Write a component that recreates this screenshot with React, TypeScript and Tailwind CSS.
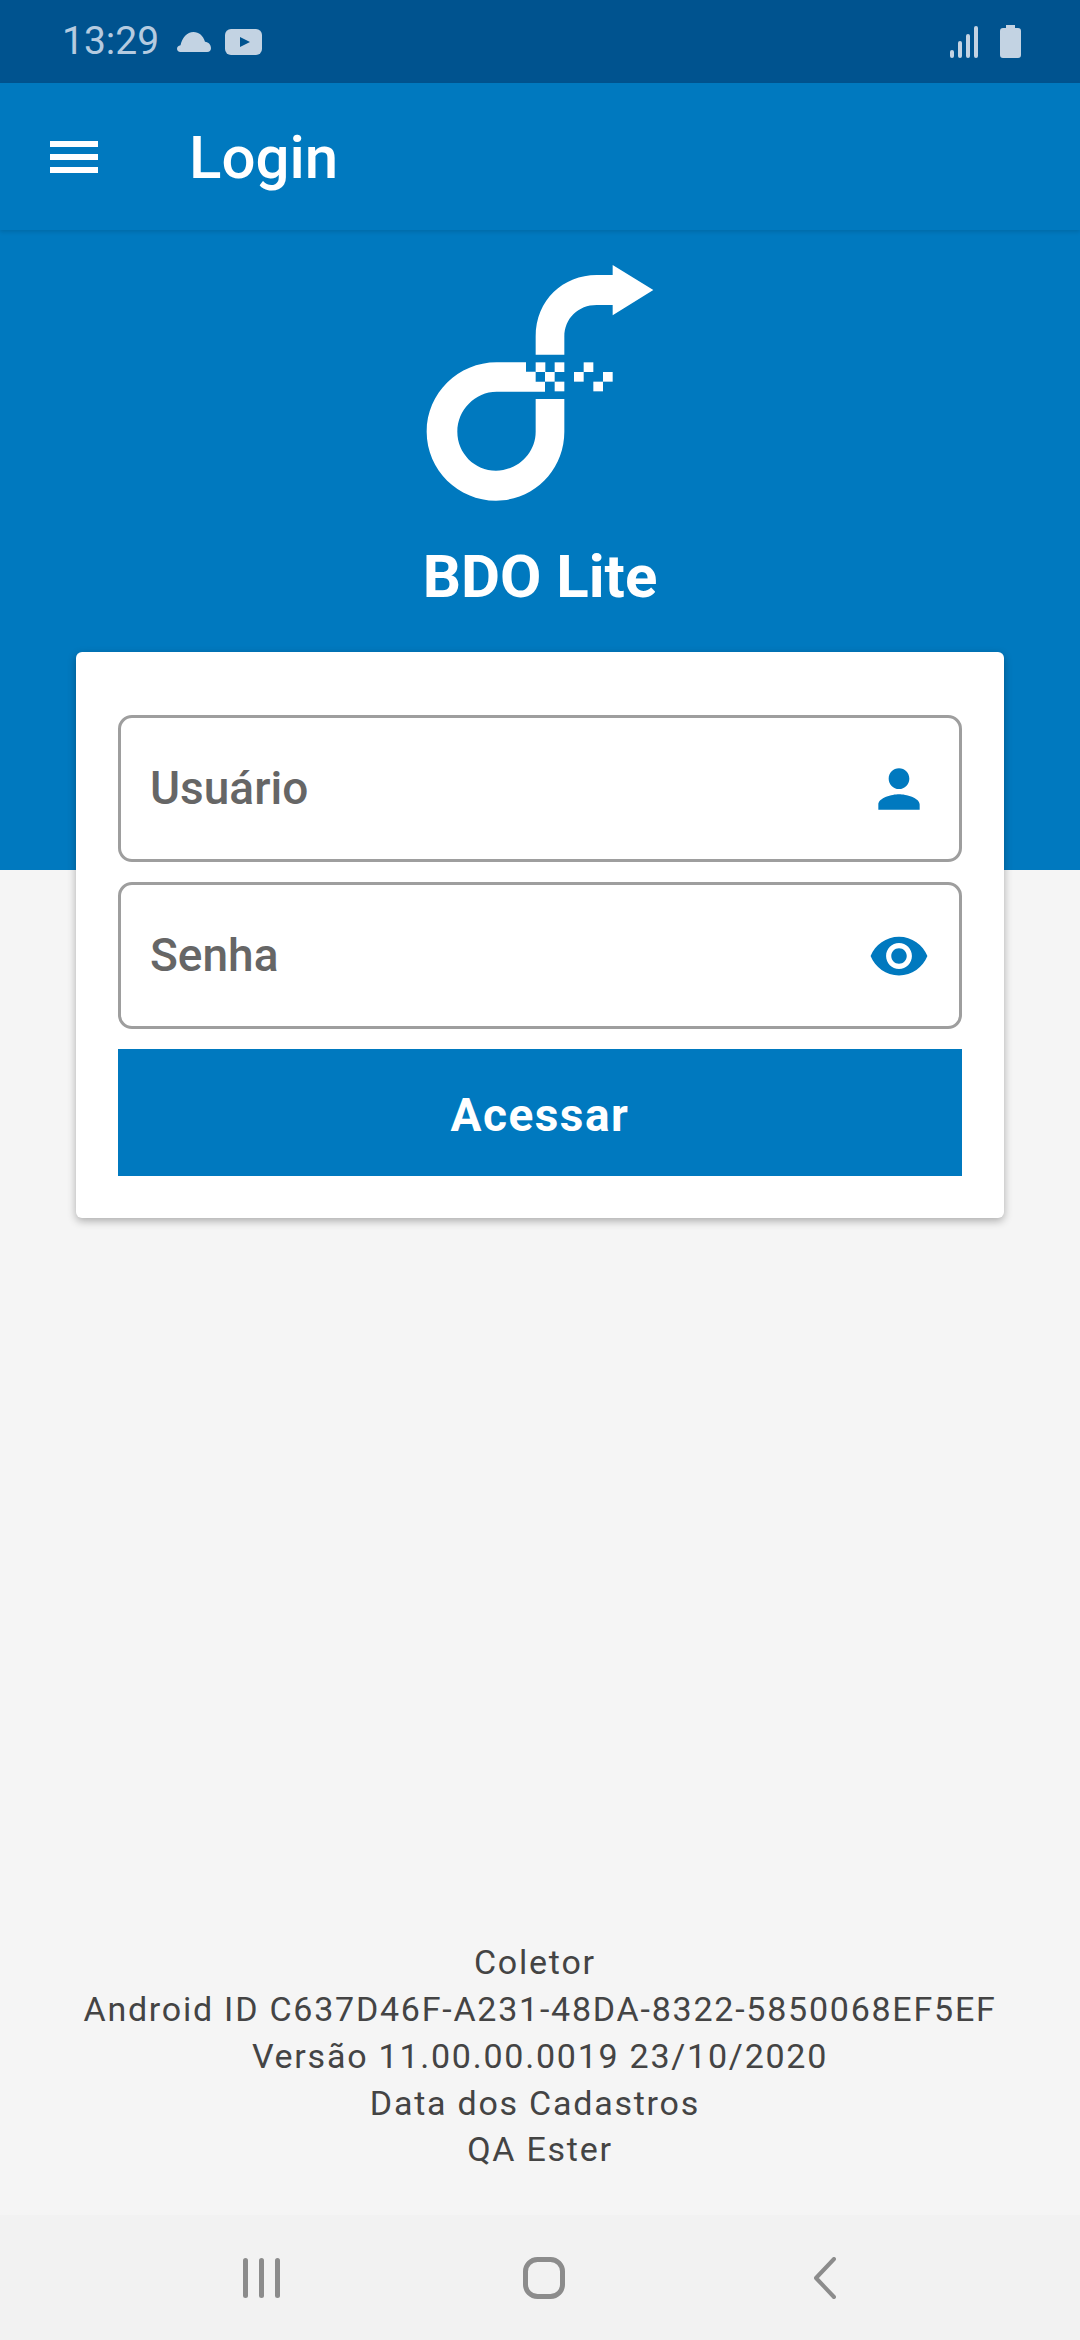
export default function App() {
    return (
        <div className="relative flex flex-col h-[2340px] w-[1080px] overflow-hidden bg-[#f5f5f5] font-['Roboto',sans-serif]">
            {/* status bar */}
            <div className="flex items-center justify-between h-[83px] bg-[#00538f] pl-[62px] pr-[59px]">
                <div className="flex items-center">
                    <span className="text-[39px] leading-none text-[#b5cbe0]">13:29</span>
                    <svg className="ml-[18px] w-[34px] h-[20px]" viewBox="0 0 34 20" fill="#c3d3e3">
                        <path d="M3.5 20C1.3 20 0 18.6 0 16.8 0 15 1.3 13.6 3.5 13.3 5.2 5.5 10 0 16.5 0 22 0 26 3.5 28 9.8c3.6.5 6 3 6 6.4 0 2.4-1.5 3.8-3.8 3.8z" />
                    </svg>
                    <svg className="ml-[14px] w-[37px] h-[26px]" viewBox="0 0 37 26">
                        <rect width="37" height="26" rx="6" fill="#c3d3e3" />
                        <path d="M15 8l10 5-10 5z" fill="#00538f" />
                    </svg>
                </div>
                <div className="flex items-center gap-[21px]">
                    <svg className="w-[30px] h-[32px]" viewBox="0 0 30 32" fill="#c3d3e3">
                        <rect x="1" y="24" width="4" height="8" rx="2" />
                        <rect x="9" y="15" width="4" height="17" rx="2" />
                        <rect x="17" y="8" width="4" height="24" rx="2" />
                        <rect x="25" y="0" width="4" height="32" rx="2" />
                    </svg>
                    <svg className="w-[21px] h-[33px]" viewBox="0 0 21 33" fill="#c3d3e3">
                        <path d="M6 0h9v3h3a3 3 0 0 1 3 3v24a3 3 0 0 1-3 3H3a3 3 0 0 1-3-3V6a3 3 0 0 1 3-3h3z" />
                    </svg>
                </div>
            </div>

            {/* hero */}
            <div className="flex flex-col items-center h-[787px] bg-[#0079bf]">
                <div className="flex items-center self-stretch h-[147px] pl-[50px] bg-[#0079bf] shadow-[0_2px_4px_rgba(0,0,0,0.12)]">
                    <div className="flex flex-col gap-[7px] w-[48px]">
                        <div className="h-[6px] bg-white"></div>
                        <div className="h-[6px] bg-white"></div>
                        <div className="h-[6px] bg-white"></div>
                    </div>
                    <h1 className="ml-[91px] pt-[3px] text-[60px] leading-none font-medium text-white">Login</h1>
                </div>
                <svg className="mt-[20px] w-[280px] h-[270px]" viewBox="0 0 840 810" fill="white">
                    <path d="M407 314V260C407 150 490 75 590 75H638V45L760 120 638 196V165H590C535 165 493 205 493 260V314Z" />
                    <path d="M378 337H290C175 337 80 430 80 545S175 752 288 752 493 660 493 545V447H407V545C407 610 352 662 288 662S172 610 172 545 225 425 290 425H435V395H407V365H378Z" />
                    <rect x="407" y="337" width="29" height="29" />
                    <rect x="464" y="337" width="29" height="29" />
                    <rect x="435" y="366" width="29" height="29" />
                    <rect x="464" y="395" width="29" height="29" />
                    <rect x="551" y="337" width="29" height="29" />
                    <rect x="522" y="366" width="29" height="29" />
                    <rect x="609" y="366" width="29" height="29" />
                    <rect x="580" y="395" width="29" height="29" />
                </svg>
                <h2 className="mt-[27px] text-[60px] leading-none font-bold text-white">BDO Lite</h2>
            </div>

            {/* card sits over the end of the hero */}
            <div className="relative mt-[-218px] mx-[76px] flex flex-col gap-[20px] pt-[63px] pb-[42px] px-[42px] bg-white rounded-[6px] shadow-[0_3px_8px_rgba(0,0,0,0.3)]">
                <div className="flex items-center justify-between h-[147px] pl-[29px] pr-[29px] border-[3px] border-[#9e9e9e] rounded-[14px]">
                    <span className="text-[46px] font-medium text-[#666666]">Usuário</span>
                    <svg className="w-[62px] h-[62px]" viewBox="0 0 24 24" fill="#0079bf">
                        <path d="M12 12c2.21 0 4-1.79 4-4s-1.79-4-4-4-4 1.79-4 4 1.79 4 4 4zm0 2c-2.67 0-8 1.34-8 4v2h16v-2c0-2.66-5.33-4-8-4z" />
                    </svg>
                </div>
                <div className="flex items-center justify-between h-[147px] pl-[29px] pr-[29px] border-[3px] border-[#9e9e9e] rounded-[14px]">
                    <span className="text-[46px] font-medium text-[#666666]">Senha</span>
                    <svg className="w-[62px] h-[62px]" viewBox="0 0 24 24" fill="#0079bf">
                        <path d="M12 4.5C7 4.5 2.73 7.61 1 12c1.73 4.39 6 7.5 11 7.5s9.27-3.11 11-7.5c-1.73-4.39-6-7.5-11-7.5zM12 17c-2.76 0-5-2.24-5-5s2.24-5 5-5 5 2.24 5 5-2.24 5-5 5zm0-8c-1.66 0-3 1.34-3 3s1.34 3 3 3 3-1.34 3-3-1.34-3-3-3z" />
                    </svg>
                </div>
                <button className="h-[127px] pt-[5px] bg-[#0079bf] text-white text-[46px] font-bold tracking-[1.5px]">Acessar</button>
            </div>

            {/* footer */}
            <div className="mt-auto mb-[42px] flex flex-col items-center text-[34px] leading-[46.7px] tracking-[1.76px] text-[#444444] whitespace-pre">
                <span>{"Coletor "}</span>
                <span>Android ID C637D46F-A231-48DA-8322-5850068EF5EF</span>
                <span>Versão 11.00.00.0019 23/10/2020</span>
                <span>{"Data dos Cadastros "}</span>
                <span>QA Ester</span>
            </div>

            {/* nav bar */}
            <div className="flex items-center justify-between h-[125px] bg-[#f2f2f2] pl-[243px] pr-[244px]">
                <svg className="w-[40px] h-[42px]" viewBox="0 0 40 42" fill="#8c8c8c">
                    <rect x="0" y="1" width="5" height="40" rx="2.5" />
                    <rect x="16" y="1" width="5" height="40" rx="2.5" />
                    <rect x="32" y="1" width="5" height="40" rx="2.5" />
                </svg>
                <svg className="w-[42px] h-[42px] mr-[10px]" viewBox="0 0 42 42" fill="none" stroke="#8c8c8c" strokeWidth="5">
                    <rect x="2.5" y="2.5" width="37" height="37" rx="12" />
                </svg>
                <svg className="w-[22px] h-[42px]" viewBox="0 0 22 42" fill="none" stroke="#8c8c8c" strokeWidth="4" strokeLinecap="round" strokeLinejoin="round">
                    <path d="M20 2L2 21l18 19" />
                </svg>
            </div>
        </div>
    );
}
